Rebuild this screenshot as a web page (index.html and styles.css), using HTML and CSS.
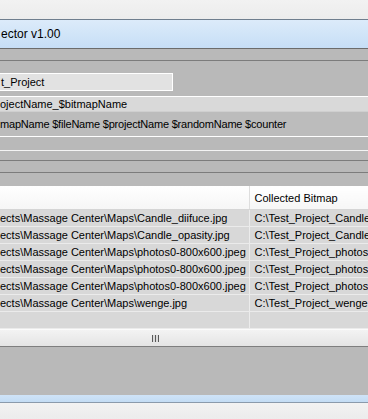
FILE: index.html
```html
<!DOCTYPE html>
<html lang="en">
<head>
    <meta charset="UTF-8">
    <meta name="viewport" content="width=device-width, initial-scale=1.0">
    <title>Bitmap Collector v1.00</title>
    <link rel="stylesheet" href="styles.css">
</head>
<body>
    <div class="window">
        <div class="desk"></div>
        <div class="titlebar">ector v1.00</div>
        <div class="menu-band"></div>
        <div class="form">
            <div class="field field-short">t_Project</div>
        </div>
        <div class="field field-wide">ojectName_$bitmapName</div>
        <div class="hint">mapName $fileName $projectName $randomName $counter</div>
        <div class="strip strip-a"></div>
        <div class="strip strip-b"></div>
        <div class="strip strip-c"></div>
        <div class="strip strip-d"></div>
        <table class="grid">
            <colgroup><col class="col-src"><col></colgroup>
            <thead>
                <tr><th></th><th>Collected Bitmap</th></tr>
            </thead>
            <tbody>
                <tr><td>ects\Massage Center\Maps\Candle_diifuce.jpg</td><td>C:\Test_Project_Candle_diifuce.jpg</td></tr>
                <tr><td>ects\Massage Center\Maps\Candle_opasity.jpg</td><td>C:\Test_Project_Candle_opasity.jpg</td></tr>
                <tr><td>ects\Massage Center\Maps\photos0-800x600.jpeg</td><td>C:\Test_Project_photos0-800x600.jpeg</td></tr>
                <tr><td>ects\Massage Center\Maps\photos0-800x600.jpeg</td><td>C:\Test_Project_photos0-800x600.jpeg</td></tr>
                <tr><td>ects\Massage Center\Maps\photos0-800x600.jpeg</td><td>C:\Test_Project_photos0-800x600.jpeg</td></tr>
                <tr><td>ects\Massage Center\Maps\wenge.jpg</td><td>C:\Test_Project_wenge.jpg</td></tr>
                <tr><td></td><td></td></tr>
            </tbody>
        </table>
        <div class="hscroll"><span class="grip"></span></div>
        <div class="footer"></div>
        <div class="frame-bottom"></div>
        <div class="desk desk-bottom"></div>
    </div>
</body>
</html>
```

FILE: styles.css
```css
html, body {
    margin: 0;
    padding: 0;
    background: #f0f0f0;
}
.window {
    width: 368px;
    height: 419px;
    overflow: hidden;
    font-family: "Liberation Sans", Arial, sans-serif;
    font-size: 11px;
    color: #000;
    display: flex;
    flex-direction: column;
}
.desk {
    height: 19px;
    flex: none;
    background: linear-gradient(#f2f2f2, #ececec);
}
.desk-bottom {
    height: 16px;
}
.titlebar {
    height: 28px;
    flex: none;
    border-top: 1px solid #6f7e8e;
    border-bottom: 1px solid #6c6c6c;
    background: linear-gradient(#dcebfa, #c6def6);
    font-size: 12px;
    line-height: 28px;
    padding-left: 1px;
}
.menu-band {
    height: 11px;
    flex: none;
    background: #b9b9b9;
    border-bottom: 1px solid #7c7c7c;
}
.form {
    height: 35px;
    flex: none;
    background: #b9b9b9;
    padding-top: 12px;
    box-sizing: border-box;
}
.field {
    background: #e2e2e2;
    white-space: nowrap;
    overflow: hidden;
    box-sizing: border-box;
}
.field-short {
    width: 173px;
    height: 18px;
    line-height: 16px;
    border: 1px solid #fff;
    border-left: none;
    padding-left: 1px;
}
.field-wide {
    height: 15px;
    flex: none;
    line-height: 14px;
    border-top: 1px solid #fff;
    background: #d9d9d9;
}
.hint {
    height: 26px;
    flex: none;
    line-height: 25px;
    background: #bcbcbc;
    border-top: 1px solid #cfcfcf;
    border-bottom: 1px solid #fff;
    box-sizing: border-box;
    white-space: nowrap;
    letter-spacing: -0.2px;
}
.strip {
    flex: none;
    background: #b9b9b9;
}
.strip-a {
    height: 13px;
    border-bottom: 1px solid #f4f4f4;
}
.strip-b {
    height: 9px;
    border-bottom: 1px solid #7c7c7c;
}
.strip-c {
    height: 11px;
    border-bottom: 1px solid #7c7c7c;
}
.strip-d {
    height: 13px;
}
.grid {
    flex: none;
    width: 368px;
    border-collapse: collapse;
    table-layout: fixed;
}
.grid .col-src {
    width: 249px;
}
.grid th {
    height: 23px;
    padding: 0 0 0 5px;
    background: linear-gradient(#ffffff, #f6f6f6);
    border-bottom: 1px solid #d5d5d5;
    border-left: 1px solid #dedede;
    font-weight: normal;
    text-align: left;
    white-space: nowrap;
    overflow: hidden;
}
.grid td {
    height: 16px;
    padding: 0 0 0 5px;
    background: #d8d8d8;
    border-bottom: 1px solid #ebebeb;
    border-left: 1px solid #ececec;
    white-space: nowrap;
    overflow: hidden;
    line-height: 16px;
}
.grid th:first-child,
.grid td:first-child {
    padding-left: 0;
    border-left: none;
}
.hscroll {
    height: 16px;
    flex: none;
    border-top: 1px solid #fbfbfb;
    border-bottom: 1px solid #7e7e7e;
    background: linear-gradient(#f3f3f3, #e4e4e4);
    display: flex;
    justify-content: center;
    align-items: center;
    padding-right: 58px;
}
.grip {
    width: 7px;
    height: 7px;
    background: repeating-linear-gradient(90deg, #5a5a5a 0 1px, #dcdcdc 1px 3px);
}
.footer {
    height: 48px;
    flex: none;
    background: #b9b9b9;
}
.frame-bottom {
    height: 7px;
    flex: none;
    background: linear-gradient(#cfe3f7, #c3dcf4);
    border-bottom: 1px solid #8a9aab;
}
```
